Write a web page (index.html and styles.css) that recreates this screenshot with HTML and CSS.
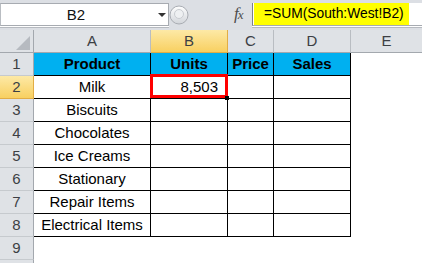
FILE: index.html
```html
<!DOCTYPE html>
<html>
<head>
<meta charset="utf-8">
<link rel="stylesheet" href="styles.css">
</head>
<body>
<div class="app">
  <div class="fbar">
    <div class="namebox"><span class="ref">B2</span><span class="caret"></span></div>
    <div class="grip">
      <svg width="20" height="22" viewBox="0 0 20 22">
        <defs>
          <linearGradient id="g" x1="0" y1="0" x2="0" y2="1">
            <stop offset="0" stop-color="#ffffff"/>
            <stop offset="1" stop-color="#d2d5da"/>
          </linearGradient>
        </defs>
        <circle cx="10" cy="11" r="9" fill="url(#g)" stroke="#a9adb3" stroke-width="1"/>
        <circle cx="10" cy="10" r="4.5" fill="#eef0f2" stroke="#c9ccd1" stroke-width="1"/>
      </svg>
    </div>
    <div class="fx"><span class="f">f</span><span class="x">x</span></div>
    <div class="formula"><span class="hl">=SUM(South:West!B2)</span></div>
  </div>
  <div class="sheet">
    <div class="corner"><span class="tri"></span></div>
    <div class="ch">A</div>
    <div class="ch sel">B</div>
    <div class="ch">C</div>
    <div class="ch">D</div>
    <div class="ch last">E</div>

    <div class="rh">1</div>
    <div class="c hd">Product</div>
    <div class="c hd">Units</div>
    <div class="c hd">Price</div>
    <div class="c hd">Sales</div>
    <div class="e"></div>

    <div class="rh sel">2</div>
    <div class="c">Milk</div>
    <div class="c num active">8,503<span class="selbox"></span><span class="handle"></span></div>
    <div class="c"></div>
    <div class="c"></div>
    <div class="e"></div>

    <div class="rh">3</div>
    <div class="c">Biscuits</div>
    <div class="c"></div>
    <div class="c"></div>
    <div class="c"></div>
    <div class="e"></div>

    <div class="rh">4</div>
    <div class="c">Chocolates</div>
    <div class="c"></div>
    <div class="c"></div>
    <div class="c"></div>
    <div class="e"></div>

    <div class="rh">5</div>
    <div class="c">Ice Creams</div>
    <div class="c"></div>
    <div class="c"></div>
    <div class="c"></div>
    <div class="e"></div>

    <div class="rh">6</div>
    <div class="c">Stationary</div>
    <div class="c"></div>
    <div class="c"></div>
    <div class="c"></div>
    <div class="e"></div>

    <div class="rh">7</div>
    <div class="c">Repair Items</div>
    <div class="c"></div>
    <div class="c"></div>
    <div class="c"></div>
    <div class="e"></div>

    <div class="rh">8</div>
    <div class="c">Electrical Items</div>
    <div class="c"></div>
    <div class="c"></div>
    <div class="c"></div>
    <div class="e"></div>

    <div class="rh">9</div>
    <div class="e"></div>
    <div class="e"></div>
    <div class="e"></div>
    <div class="e"></div>
    <div class="e"></div>

    <div class="rh stub"></div>
    <div class="e stub"></div>
    <div class="e stub"></div>
    <div class="e stub"></div>
    <div class="e stub"></div>
    <div class="e stub"></div>
  </div>
</div>
</body>
</html>
```

FILE: styles.css
```css
* { box-sizing: border-box; }
html, body { margin: 0; padding: 0; }
body {
  width: 422px;
  height: 263px;
  overflow: hidden;
  background: #ffffff;
  font-family: "Liberation Sans", Arial, sans-serif;
}
.app { width: 422px; height: 263px; overflow: hidden; }

.fbar {
  height: 30px;
  background: #dcdfe4;
  display: flex;
  align-items: flex-start;
  padding-top: 3px;
}
.namebox {
  width: 169px;
  height: 23px;
  background: #fff;
  border: 1px solid #a7abb1;
  border-left: 1px solid #b9bdc2;
  box-shadow: 0 1px 0 #ffffff, 0 2px 0 #b6bac0;
  display: flex;
  align-items: center;
  position: relative;
}
.ref {
  width: 150px;
  text-align: center;
  font-size: 15px;
  color: #111;
}
.caret {
  position: absolute;
  left: 157px;
  top: 9px;
  width: 0;
  height: 0;
  border-left: 4px solid transparent;
  border-right: 4px solid transparent;
  border-top: 4px solid #333;
}
.grip {
  width: 22px;
  height: 23px;
  display: flex;
  align-items: center;
}
.grip svg { display: block; }
.fx {
  width: 61px;
  height: 23px;
  padding-left: 43px;
  font-family: "Liberation Serif", serif;
  font-style: italic;
  color: #4d4d4d;
  line-height: 22px;
}
.fx .f { font-size: 17px; }
.fx .x { font-size: 13px; margin-left: -1px; }
.formula {
  flex: 1;
  height: 23px;
  background: #fff;
  border-left: 1px solid #7d8187;
  border-bottom: 1px solid #a7abb1;
  box-shadow: 0 1px 0 #ffffff, 0 2px 0 #b6bac0;
  padding-left: 1px;
}
.hl {
  display: inline-block;
  height: 22px;
  width: 155px;
  background: #ffff00;
  padding-left: 10px;
  font-size: 13.8px;
  line-height: 22px;
  color: #000;
  white-space: nowrap;
}

.sheet {
  display: grid;
  grid-template-columns: 34px 117px 77px 46px 77px 1fr;
  grid-template-rows: repeat(10, 23px) 4px;
  font-size: 15px;
}
.corner {
  background: #dfe2e6;
  border-right: 1px solid #a3a8ae;
  border-bottom: 1px solid #a3a8ae;
  position: relative;
}
.tri {
  position: absolute;
  right: 3px;
  bottom: 2px;
  width: 0;
  height: 0;
  border-left: 14px solid transparent;
  border-bottom: 14px solid #b6bac0;
}
.ch {
  background: #dfe2e6;
  border-right: 1px solid #b9bdc2;
  border-bottom: 1px solid #a3a8ae;
  text-align: center;
  line-height: 22px;
  color: #3c3f44;
}
.ch.sel, .rh.sel {
  background: linear-gradient(#fde9a6, #f8d061);
  border-right-color: #e2ad45;
  border-bottom-color: #e2ad45;
  color: #3c3f44;
}
.ch.last { border-right: none; }
.rh {
  background: #dfe2e6;
  border-right: 1px solid #a3a8ae;
  border-bottom: 1px solid #c6cace;
  text-align: center;
  line-height: 22px;
  color: #3c3f44;
}
.rh.stub { border-bottom: none; }
.c {
  border-right: 1px solid #000;
  border-bottom: 1px solid #000;
  text-align: center;
  line-height: 22px;
  color: #000;
  white-space: nowrap;
}
.c.hd {
  background: #00b0f0;
  font-weight: bold;
}
.c.num {
  text-align: right;
  padding-right: 9px;
}
.e { background: #fff; }
.active { position: relative; }
.selbox {
  position: absolute;
  left: -1px;
  top: -2px;
  right: -1px;
  bottom: 0px;
  border: 3px solid #ff0000;
}
.handle {
  position: absolute;
  right: -2px;
  bottom: -2px;
  width: 4px;
  height: 4px;
  background: #000;
}
```
